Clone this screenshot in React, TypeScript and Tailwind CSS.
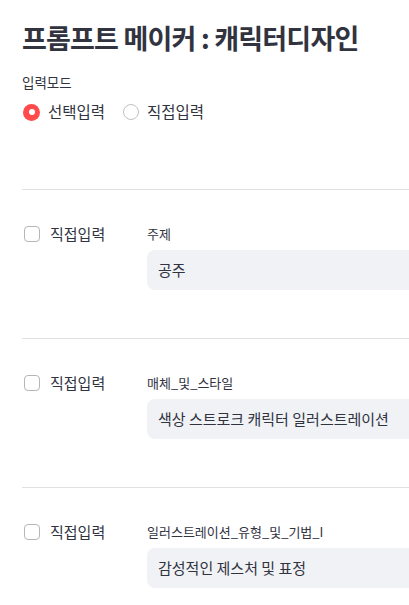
import React from "react";

const FONT = { fontFamily: '"Noto Sans CJK KR", "Noto Sans", sans-serif' };

function Checkbox() {
  return <span className="block w-4 h-4 rounded-[4px] border border-[#b4b6bc] bg-white" />;
}

function Block({ label, value }: { label: string; value: string }) {
  return (
    <div>
      <div className="h-px bg-[#dfe0e4]" />
      <div className="pt-[32px] pb-[48px] flex items-start">
        <div className="w-[125px] flex items-center h-[24px] pl-[2px]">
          <Checkbox />
          <span className="ml-[10px] text-[15px] leading-[24px] text-[#31333f]">직접입력</span>
        </div>
        <div className="flex-1">
          <div className="h-[24px] leading-[24px] text-[13px] text-[#31333f]">{label}</div>
          <div className="mt-[4px] h-[40px] rounded-[8px] bg-[#f0f2f6] flex items-center pl-[11px] text-[15px] text-[#31333f]">
            {value}
          </div>
        </div>
      </div>
    </div>
  );
}

export default function App() {
  return (
    <div className="w-[409px] h-[605px] overflow-hidden bg-white" style={FONT}>
      <div className="w-[540px] pl-[22px]">
        <h1 className="mt-[21px] text-[27px] leading-[34px] font-bold text-[#31333f] tracking-[-0.8px]">
          프롬프트 메이커 : 캐릭터디자인
        </h1>
        <div className="mt-[17px] text-[13.5px] leading-[20px] text-[#31333f]">입력모드</div>
        <div className="mt-[8px] h-[24px] flex items-center">
          <div className="flex items-center pl-[1px]">
            <span className="w-[17px] h-[17px] rounded-full bg-[#ff4b4b] flex items-center justify-center">
              <span className="w-[6px] h-[6px] rounded-full bg-white" />
            </span>
            <span className="ml-[8px] text-[15.5px] text-[#31333f]">선택입력</span>
          </div>
          <div className="flex items-center ml-[18px]">
            <span className="w-[16px] h-[16px] rounded-full border border-[#bfc1c6] bg-white" />
            <span className="ml-[8px] text-[15.5px] text-[#31333f]">직접입력</span>
          </div>
        </div>
        <div className="h-[65px]" />
        <Block label="주제" value="공주" />
        <Block label="매체_및_스타일" value="색상 스트로크 캐릭터 일러스트레이션" />
        <Block label="일러스트레이션_유형_및_기법_I" value="감성적인 제스처 및 표정" />
      </div>
    </div>
  );
}
